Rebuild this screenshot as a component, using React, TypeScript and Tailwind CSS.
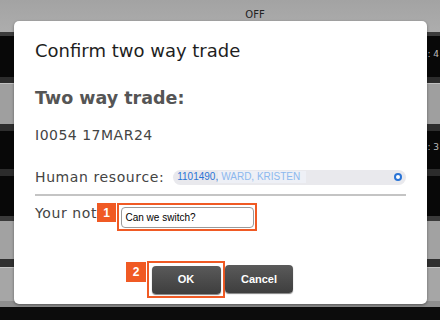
import React from "react";

export default function App() {
  const dv = { fontFamily: '"DejaVu Sans", Verdana, sans-serif' };
  const ar = { fontFamily: '"Liberation Sans", Arial, sans-serif' };
  return (
    <div className="relative w-[440px] h-[320px] overflow-hidden bg-black">
      {/* background app rows */}
      <div className="flex flex-col w-full h-full">
        <div className="h-[32px] bg-gradient-to-b from-[#a3a3a3] to-[#adadad] flex items-start justify-center pl-[70px] pt-[7px]">
          <span className="text-[10px] text-[#222]" style={dv}>OFF</span>
        </div>
        <div className="h-[4px] bg-[#3c3c3c]" />
        <div className="h-[41px] bg-[#080808] flex justify-end items-start pt-[12px] pr-[1px]">
          <span className="text-[9px] text-[#bbb]" style={dv}>: 4</span>
        </div>
        <div className="h-[7px] bg-[#2c2c2c] border-b border-[#c0c0c0]" />
        <div className="h-[40px] bg-[#9f9f9f]" />
        <div className="h-[7px] bg-[#2e2e2e]" />
        <div className="h-[38px] bg-[#080808] flex justify-end items-start pt-[10px] pr-[1px]">
          <span className="text-[9px] text-[#bbb]" style={dv}>: 3</span>
        </div>
        <div className="h-[7px] bg-[#2c2c2c]" />
        <div className="h-[40px] bg-[#080808]" />
        <div className="h-[5px] bg-[#3a3a3a]" />
        <div className="h-[38px] bg-[#a2a2a2]" />
        <div className="h-[8px] bg-[#303030]" />
        <div className="h-[34px] bg-[#a6a6a6] border-t border-[#c4c4c4]" />
        <div className="h-[6px] bg-[#8e8e8e]" />
        <div className="flex-1 bg-[#0c0c0c]" />
      </div>

      {/* modal */}
      <div className="absolute left-[14px] top-[21px] w-[413px] h-[283px] bg-white rounded-[5px] shadow-[0_1px_3px_rgba(0,0,0,0.4)] pl-[21px] pr-[21px] flex flex-col">
        <div className="mt-[19px] text-[18px] leading-[22px] text-[#1e1e1e] whitespace-nowrap" style={dv}>
          Confirm two way trade
        </div>
        <div className="mt-[26px] text-[17.5px] leading-[20px] font-bold text-[#555] whitespace-nowrap" style={dv}>
          Two way trade:
        </div>
        <div className="mt-[18px] text-[14px] leading-[18px] text-[#444] tracking-[0.5px] whitespace-nowrap" style={dv}>
          I0054 17MAR24
        </div>
        <div className="mt-[24px] flex items-center">
          <span className="shrink-0 whitespace-nowrap text-[14px] leading-[18px] text-[#444] tracking-[0.6px]" style={dv}>
            Human resource:
          </span>
          <div className="ml-[9px] w-[233px] shrink-0 h-[15px] rounded-full bg-[#e9e9ed] flex items-center pl-[4px] pr-[4px] whitespace-nowrap" style={ar}>
            <span className="text-[10px] leading-[12px] text-[#2a74d6]">1101490,</span>
            <span className="text-[10px] leading-[12px] text-[#8cb8ee] bg-[#eef0f6] pl-[3px] pr-[6px]">WARD, KRISTEN</span>
            <span className="ml-auto w-[8px] h-[8px] rounded-full bg-[#2a74d6] flex items-center justify-center">
              <span className="w-[4px] h-[4px] rounded-full bg-white" />
            </span>
          </div>
        </div>
        <div className="mt-[8px] h-[2px] w-[371px] bg-[#c4c4c4]" />
        <div className="mt-[8px] flex items-center relative">
          <span className="whitespace-nowrap text-[14px] leading-[18px] text-[#444] tracking-[0.6px]" style={dv}>
            Your not
          </span>
          <div className="absolute left-[62px] top-[-1px] w-[19px] h-[19px] bg-[#f05a24] text-white text-[12px] font-bold flex items-center justify-center" style={ar}>
            1
          </div>
          <div className="absolute left-[82px] top-[-1px] w-[140px] h-[28px] border-2 border-[#f05a24] flex items-center justify-center">
            <div className="w-[133px] h-[21px] border border-[#9a9a9a] rounded-[4px] bg-white flex items-center pl-[4px] text-[10px] text-black font-medium whitespace-nowrap" style={ar}>
              Can we switch?
            </div>
          </div>
        </div>
        <div className="mt-[39px] flex items-start pl-[91px] relative">
          <div className="w-[20px] h-[20px] mt-[1px] bg-[#f05a24] text-white text-[12px] font-bold flex items-center justify-center" style={ar}>
            2
          </div>
          <div className="ml-[1px] w-[78px] h-[37px] border-2 border-[#f05a24] flex items-center justify-center">
            <button className="w-[69px] h-[28px] rounded-[4px] bg-gradient-to-b from-[#5a5a5a] to-[#3e3e3e] text-white text-[11px] font-bold shadow-[0_1px_1px_rgba(0,0,0,0.5)]" style={ar}>
              OK
            </button>
          </div>
          <button className="mt-[4px] w-[68px] h-[28px] rounded-[4px] bg-gradient-to-b from-[#5a5a5a] to-[#3e3e3e] text-white text-[11px] font-bold shadow-[0_1px_1px_rgba(0,0,0,0.5)]" style={ar}>
            Cancel
          </button>
        </div>
      </div>
    </div>
  );
}
